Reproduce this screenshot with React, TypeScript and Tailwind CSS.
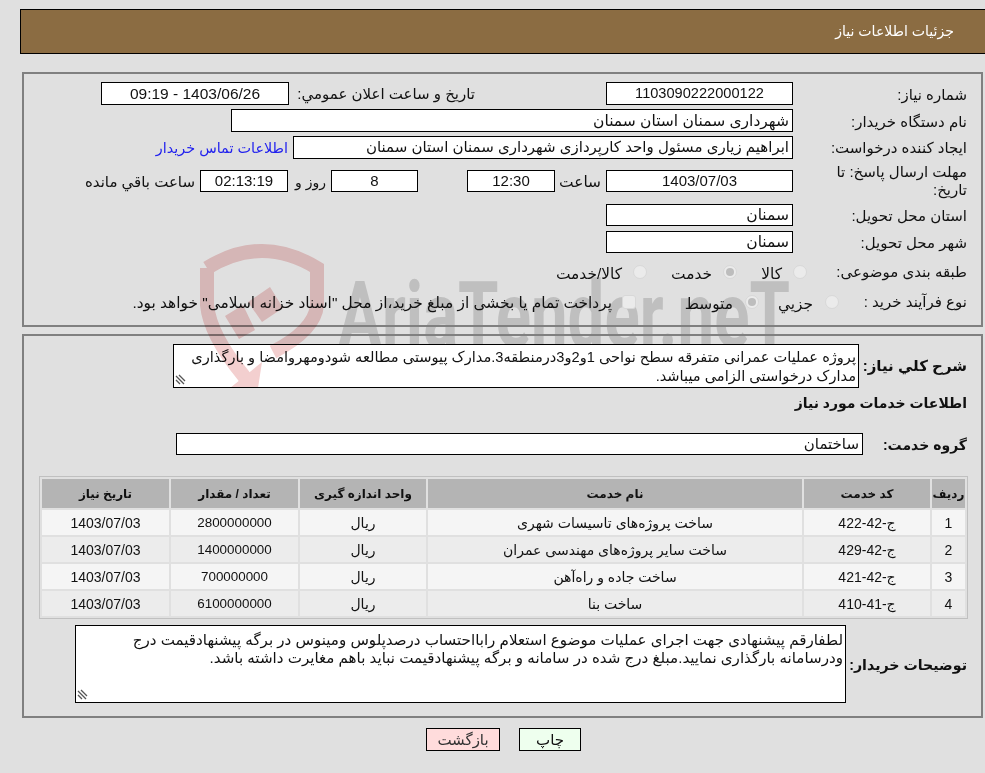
import React from "react";

const box = "border border-black bg-white flex items-center shrink-0 text-[#111]";

function Box({ w, h = "h-[23px]", center, children, bg, text = "text-[15.5px]" }: { w: string; h?: string; center?: boolean; children: React.ReactNode; bg?: string; text?: string }) {
  return (
    <div className={`${box} ${w} ${h} ${text} ${center ? "justify-center" : "pr-[3px]"} ${bg ?? ""}`}>{children}</div>
  );
}

function Radio({ checked, className }: { checked?: boolean; className?: string }) {
  return (
    <div className={`w-[14px] h-[14px] rounded-full border border-[#d8d8d8] bg-[#ebebeb] flex items-center justify-center shrink-0 ${className ?? ""}`}>
      {checked && <div className="w-[8px] h-[8px] rounded-full bg-[#bdbdbd]" />}
    </div>
  );
}

function Grip() {
  return (
    <svg className="absolute left-[1px] bottom-[2px]" width="11" height="11" viewBox="0 0 11 11">
      <path d="M1 2 L9 10 M1 6 L5 10 M4 1 L10 7" stroke="#555" strokeWidth="1.3" fill="none" />
    </svg>
  );
}

const rows = [
  ["1", "ج-42-422", "ساخت پروژه‌های تاسیسات شهری", "ریال", "2800000000", "1403/07/03"],
  ["2", "ج-42-429", "ساخت سایر پروژه‌های مهندسی عمران", "ریال", "1400000000", "1403/07/03"],
  ["3", "ج-42-421", "ساخت جاده و راه‌آهن", "ریال", "700000000", "1403/07/03"],
  ["4", "ج-41-410", "ساخت بنا", "ریال", "6100000000", "1403/07/03"],
];

export default function App() {
  return (
    <div dir="rtl" className="relative w-[985px] h-[773px] overflow-hidden bg-[#e0e0e0] text-[15px] text-[#111] font-['Liberation_Sans','DejaVu_Sans',sans-serif]">
      {/* watermark letters, behind the content */}
      <svg dir="ltr" className="absolute left-0 top-0" width="985" height="773" viewBox="0 0 985 773">
        <text x="338" y="347" direction="ltr" textAnchor="start" textLength="452" lengthAdjust="spacingAndGlyphs" fontFamily="Roboto" fontWeight="700" fontSize="92" fill="#bfbfbf">AriaTender.neT</text>
      </svg>

      <div className="relative z-10">
        <div className="pt-[9px] pl-[20px]">
          <div className="h-[45px] border border-black bg-[#8b6c42] border-r-0 flex items-center pr-[31px] pt-[1px] text-white text-[14.1px]">جزئیات اطلاعات نیاز</div>
        </div>

        <div className="mr-[2px] w-[961px] mt-[18px] border-2 border-[#808080] pt-[8px] pb-[13px] pr-[14px]">
          <div className="flex items-center h-[23px]">
            <div className="w-[174px] shrink-0 pt-[3px]">شماره نیاز:</div>
            <Box w="w-[187px]" center text="text-[14.6px]">1103090222000122</Box>
            <div className="w-[181px] mr-[131px] shrink-0 pt-[2px]">تاریخ و ساعت اعلان عمومي:</div>
            <Box w="w-[188px] mr-[5px]" center>1403/06/26 - 09:19</Box>
          </div>
          <div className="flex items-center h-[23px] mt-[4px]">
            <div className="w-[174px] shrink-0 pt-[3px]">نام دستگاه خریدار:</div>
            <Box w="w-[562px]">شهرداری سمنان استان سمنان</Box>
          </div>
          <div className="flex items-center h-[23px] mt-[4px]">
            <div className="w-[174px] shrink-0 pt-[2px]">ایجاد کننده درخواست:</div>
            <Box w="w-[500px]" text="text-[15px]">ابراهیم زیاری مسئول واحد کارپردازی شهرداری سمنان استان سمنان</Box>
            <a className="mr-[5px] text-[#2222ee] text-[14.4px] pt-[2px]">اطلاعات تماس خریدار</a>
          </div>
          <div className="flex items-center h-[22px] mt-[11px]">
            <div className="w-[174px] shrink-0 leading-[18px] pl-[25px]">مهلت ارسال پاسخ: تا تاریخ:</div>
            <Box w="w-[187px]" h="h-[22px]" center text="text-[15px]">1403/07/03</Box>
            <div className="w-[51px] pr-[5px] pt-[2px] shrink-0 text-[15.4px]">ساعت</div>
            <Box w="w-[88px]" h="h-[22px]" center text="text-[15px]">12:30</Box>
            <Box w="w-[87px] mr-[49px]" h="h-[22px]" center text="text-[15px]">8</Box>
            <div className="w-[43px] pr-[5px] pt-[2px] shrink-0 text-[14px]">روز و</div>
            <Box w="w-[88px]" h="h-[22px]" center bg="bg-[#ffffee]" text="text-[15px]">02:13:19</Box>
            <div className="mr-[5px] pt-[2px] whitespace-nowrap">ساعت باقي مانده</div>
          </div>
          <div className="flex items-center h-[22px] mt-[12px]">
            <div className="w-[174px] shrink-0 pt-[2px]">استان محل تحویل:</div>
            <Box w="w-[187px]" h="h-[22px]">سمنان</Box>
          </div>
          <div className="flex items-center h-[22px] mt-[5px]">
            <div className="w-[174px] shrink-0 pt-[2px]">شهر محل تحویل:</div>
            <Box w="w-[187px]" h="h-[22px]">سمنان</Box>
          </div>
          <div className="flex items-center h-[20px] mt-[9px] text-[15.4px]">
            <div className="w-[160px] shrink-0 text-[15px]">طبقه بندی موضوعی:</div>
            <Radio />
            <div className="mr-[11px] w-[45px] pt-[3px]">کالا</div>
            <Radio checked />
            <div className="mr-[11px] w-[65px] pt-[3px]">خدمت</div>
            <Radio />
            <div className="mr-[11px] pt-[3px]">کالا/خدمت</div>
          </div>
          <div className="flex items-center h-[20px] mt-[10px] text-[15.4px]">
            <div className="w-[128px] shrink-0 text-[15px]">نوع فرآیند خرید :</div>
            <Radio />
            <div className="mr-[12px] w-[54px] pt-[3px]">جزیي</div>
            <Radio checked />
            <div className="mr-[12px] w-[97px] pt-[3px]">متوسط</div>
            <div className="w-[14px] h-[14px] rounded-[3px] border border-[#d8d8d8] bg-[#ebebeb] shrink-0" />
            <div className="mr-[10px] pt-[2px] whitespace-nowrap">پرداخت تمام یا بخشی از مبلغ خرید،از محل "اسناد خزانه اسلامی" خواهد بود.</div>
          </div>
        </div>

        <div className="mr-[2px] w-[961px] mt-[7px] border-2 border-[#808080] pt-[8px] pb-[13px] pr-[14px]">
          <div className="flex items-center h-[44px]">
            <div className="w-[108px] shrink-0 font-bold text-[15px] pt-[1px] whitespace-nowrap">شرح كلي نياز:</div>
            <div className="relative w-[686px] h-[44px] border border-black bg-white px-[2px] leading-[19px] pt-[3px] overflow-hidden text-[14.6px]">
              پروژه عملیات عمرانی متفرقه سطح نواحی 1و2و3درمنطقه3.مدارک پیوستی مطالعه شودومهروامضا و بارگذاری مدارک درخواستی الزامی میباشد.
              <Grip />
            </div>
          </div>
          <div className="h-[20px] mt-[5px] font-bold text-[14px] flex items-center">اطلاعات خدمات مورد نیاز</div>
          <div className="flex items-center h-[22px] mt-[20px]">
            <div className="w-[104px] shrink-0 font-bold text-[14px] pt-[3px]">گروه خدمت:</div>
            <Box w="w-[687px]" h="h-[22px]" text="text-[15px]">ساختمان</Box>
          </div>
          <table className="mt-[21px] w-[929px] -mr-px table-fixed border border-[#c0c0c0] border-separate border-spacing-[2px] text-[14px]">
            <thead>
              <tr className="h-[29px] bg-[#b4b4b4] font-bold text-[12px]">
                <th className="w-[33px] p-0 pt-[1px] text-center">ردیف</th>
                <th className="w-[126px] p-0 pt-[1px] text-center">کد خدمت</th>
                <th className="w-[374px] p-0 pt-[1px] text-center">نام خدمت</th>
                <th className="w-[126px] p-0 pt-[1px] text-center">واحد اندازه گیری</th>
                <th className="w-[127px] p-0 pt-[1px] text-center">تعداد / مقدار</th>
                <th className="w-[127px] p-0 pt-[1px] text-center">تاریخ نیاز</th>
              </tr>
            </thead>
            <tbody>
              {rows.map((r, i) => (
                <tr key={r[0]} className={`h-[25px] ${i % 2 === 0 ? "bg-[#f5f5f5]" : "bg-[#ececec]"}`}>
                  {r.map((c, j) => (
                    <td key={j} className={`p-0 text-center ${j === 4 ? "text-[13.4px] pt-[2px]" : "pt-[1px]"}`}>{c}</td>
                  ))}
                </tr>
              ))}
            </tbody>
          </table>
          <div className="flex items-center h-[78px] mt-[6px]">
            <div className="w-[121px] shrink-0 font-bold text-[14.2px] pt-[4px] whitespace-nowrap">توضیحات خریدار:</div>
            <div className="relative w-[771px] h-[78px] border border-black bg-white px-[2px] leading-[18px] pt-[5px] overflow-hidden text-[15.1px]">
              لطفارقم پیشنهادی جهت اجرای عملیات موضوع استعلام رابااحتساب درصدپلوس ومینوس در برگه پیشنهادقیمت درج ودرسامانه بارگذاری نمایید.مبلغ درج شده در سامانه و برگه پیشنهادقیمت نباید باهم مغایرت داشته باشد.
              <Grip />
            </div>
          </div>
        </div>

        <div className="flex justify-center mt-[10px] gap-[19px] pl-[22px]">
          <button className="w-[62px] h-[23px] border border-black bg-[#eeffee] text-[15px]">چاپ</button>
          <button className="w-[74px] h-[23px] border border-black bg-[#ffdcdc] text-[#333] text-[15px]">بازگشت</button>
        </div>
      </div>

      {/* logo shield, tinted over everything */}
      <svg className="absolute left-0 top-0 z-20 mix-blend-multiply pointer-events-none" width="985" height="388" viewBox="0 0 985 388">
        <g fill="none" stroke="#f3cfcf" strokeWidth="14">
          <path d="M207 268 Q262 234 317 268 L317 305 Q315 330 273 352" />
          <path d="M207 268 L207 305 Q210 335 243 375 L252 388" />
        </g>
        <g fill="#f3cfcf">
          <polygon points="225,316 243,305 255,330 239,339" />
          <polygon points="248,302 270,287 283,308 262,322" />
          <polygon points="230,388 262,362 258,388" />
        </g>
      </svg>
    </div>
  );
}
